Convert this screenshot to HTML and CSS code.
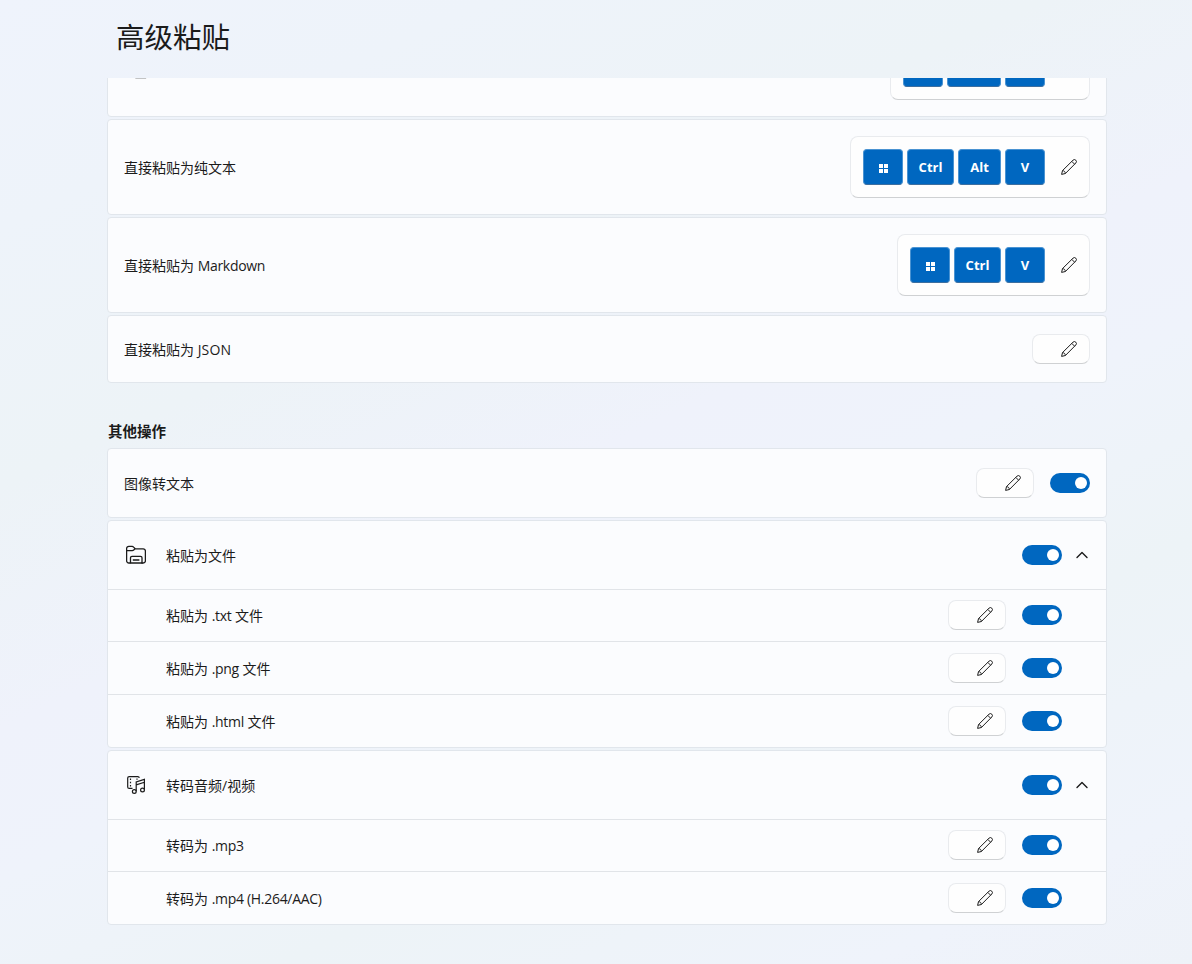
FILE: index.html
```
<!DOCTYPE html>
<html lang="zh-CN">
<head>
    <meta charset="UTF-8">
    <meta name="viewport" content="width=device-width, initial-scale=1.0">
    <title>高级粘贴</title>
    <link rel="stylesheet" href="styles.css">
</head>
<body>
    <svg class="defs" width="0" height="0">
        <symbol id="pencil" viewBox="0 0 16 16">
            <path d="M0.6 15.400l.9-3.800L12 1.200a1.950 1.950 0 0 1 2.800 2.800L4.400 14.500zM10.800 2.400l2.800 2.800M1.500 11.600c1.700.1 2.800 1.200 2.900 2.900" fill="none" stroke="currentColor" stroke-width="1" stroke-linejoin="round"/>
        </symbol>
        <symbol id="win" viewBox="0 0 9 9">
            <path d="M0 0h4v4H0zM5 0h4v4H5zM0 5h4v4H0zM5 5h4v4H5z" fill="currentColor"/>
        </symbol>
        <symbol id="chevron" viewBox="0 0 12 12">
            <path d="M1 8.6L6 3.6l5 5" fill="none" stroke="currentColor" stroke-width="1.4" stroke-linecap="round" stroke-linejoin="round"/>
        </symbol>
    </svg>

    <h1>高级粘贴</h1>
    <main class="scroll">
        <div class="card tall scrolled">
            <svg class="icon" viewBox="0 0 20 20"><path d="M6 1.500h9.500v17.200H6z" fill="none" stroke="currentColor" stroke-width="1.3"/></svg>
            <div class="shortcut">
                <span class="key"></span><span class="key shift"></span><span class="key"></span>
            </div>
        </div>
        <div class="card tall">
            <div class="label">直接粘贴为纯文本</div>
            <div class="shortcut">
                <span class="key"><svg class="win"><use href="#win"/></svg></span><span class="key ctrl">Ctrl</span><span class="key alt">Alt</span><span class="key">V</span>
                <svg class="pencil"><use href="#pencil"/></svg>
            </div>
        </div>
        <div class="card tall">
            <div class="label">直接粘贴为 <span class="latin">Markdown</span></div>
            <div class="shortcut">
                <span class="key"><svg class="win"><use href="#win"/></svg></span><span class="key ctrl">Ctrl</span><span class="key">V</span>
                <svg class="pencil"><use href="#pencil"/></svg>
            </div>
        </div>
        <div class="card">
            <div class="label">直接粘贴为 <span class="latin caps">JSON</span></div>
            <div class="shortcut"><svg class="pencil"><use href="#pencil"/></svg></div>
        </div>

        <h2>其他操作</h2>
        <div class="card single">
            <div class="label">图像转文本</div>
            <div class="shortcut"><svg class="pencil"><use href="#pencil"/></svg></div>
            <span class="toggle"></span>
        </div>

        <section class="group">
            <div class="group-head">
                <svg class="icon" viewBox="0 0 20 20">
                    <path d="M4.500 18H2.800A2.200 2.200 0 0 1 .6 15.800V3.600a2.200 2.200 0 0 1 2.200-2.200h3.300a2 2 0 0 1 1.500.7L9.200 3.800h8a2.200 2.200 0 0 1 2.200 2.200v9.800a2.200 2.200 0 0 1-2.200 2.200H15.500M.6 5.600h5.600a2 2 0 0 0 1.500-.6L9.200 3.800" fill="none" stroke="currentColor" stroke-width="1.3"/>
                    <path d="M4.500 18v-5.200a1.500 1.500 0 0 1 1.500-1.500h8.500a1.500 1.500 0 0 1 1.500 1.500V18zM6.800 15h6.600" fill="none" stroke="currentColor" stroke-width="1.3"/>
                </svg>
                <div class="label">粘贴为文件</div>
                <span class="toggle"></span>
                <svg class="chevron"><use href="#chevron"/></svg>
            </div>
            <div class="sub first">
                <div class="label">粘贴为 <span class="latin">.txt</span> 文件</div>
                <div class="shortcut"><svg class="pencil"><use href="#pencil"/></svg></div>
                <span class="toggle"></span>
            </div>
            <div class="sub">
                <div class="label">粘贴为 <span class="latin">.png</span> 文件</div>
                <div class="shortcut"><svg class="pencil"><use href="#pencil"/></svg></div>
                <span class="toggle"></span>
            </div>
            <div class="sub">
                <div class="label">粘贴为 <span class="latin">.html</span> 文件</div>
                <div class="shortcut"><svg class="pencil"><use href="#pencil"/></svg></div>
                <span class="toggle"></span>
            </div>
        </section>

        <section class="group">
            <div class="group-head">
                <svg class="icon" viewBox="0 0 20 20">
                    <g fill="none" stroke="currentColor" stroke-width="1.2">
                        <path d="M6.500 13.400H3.200a1.500 1.500 0 0 1-1.500-1.500V3.100a1.500 1.500 0 0 1 1.500-1.500h8.600a1.500 1.500 0 0 1 1.500 1.300"/>
                        <path d="M4.500 3.500v1.500M4.500 6.800v1.500M4.500 10v1.500M11 3.400v1.400"/>
                        <path d="M10.200 16.200V7l8.200-2.600v10.100M10.200 9.900l8.200-2.600"/>
                        <circle cx="8.300" cy="16.500" r="1.900"/>
                        <circle cx="16.500" cy="15" r="1.900"/>
                    </g>
                </svg>
                <div class="label">转码音频/视频</div>
                <span class="toggle"></span>
                <svg class="chevron"><use href="#chevron"/></svg>
            </div>
            <div class="sub first">
                <div class="label">转码为 <span class="latin">.mp3</span></div>
                <div class="shortcut"><svg class="pencil"><use href="#pencil"/></svg></div>
                <span class="toggle"></span>
            </div>
            <div class="sub">
                <div class="label">转码为 <span class="latin">.mp4 (H.264/AAC)</span></div>
                <div class="shortcut"><svg class="pencil"><use href="#pencil"/></svg></div>
                <span class="toggle"></span>
            </div>
        </section>
    </main>
</body>
</html>
```
FILE: styles.css
```
* {
    margin: 0;
    padding: 0;
    box-sizing: border-box;
}

body {
    height: 964px;
    overflow: hidden;
    background: linear-gradient(155deg, #eff3fc 0%, #eef3fa 15%, #edf3f7 32%, #eff2fb 48%, #eff3fb 58%, #edf3f7 72%, #eff3fb 90%, #eef2f8 100%);
    color: #1b1b1b;
    font-family: "Open Sans", "Noto Sans CJK SC", sans-serif;
    font-size: 14px;
}

svg {
    display: block;
    flex: none;
}

.defs {
    display: none;
}

h1 {
    height: 78px;
    padding: 17px 0 0 116px;
    font-size: 28.5px;
    font-weight: 400;
    line-height: 40px;
}

.scroll {
    height: 886px;
    padding: 0 85px 0 107px;
    overflow: hidden;
}

.card,
.group {
    margin-bottom: 2px;
    background: #fbfcfe;
    border: 1px solid #e1e6ec;
    border-radius: 4px;
}

.card {
    display: flex;
    align-items: center;
    height: 68px;
    padding: 0 16px;
}

.card.tall {
    height: 96px;
}

.card.scrolled {
    margin-top: -57px;
}

.card.single {
    height: 70px;
}

h2 {
    height: 63px;
    padding: 37px 0 0 1px;
    font-size: 14.5px;
    font-weight: 600;
    line-height: 20px;
}

.label {
    padding-top: 2px;
    line-height: 20px;
    white-space: nowrap;
}

.latin {
    letter-spacing: -0.3px;
}

.latin.caps {
    letter-spacing: 0.2px;
}

.icon {
    width: 20px;
    height: 20px;
    margin: 0 20px 0 2px;
}

.scrolled .icon {
    margin-left: 6px;
}

.shortcut {
    display: flex;
    align-items: center;
    gap: 4px;
    height: 30px;
    margin-left: auto;
    padding: 0 12px;
    background: #fefefe;
    border: 1px solid #e9ebee;
    border-bottom-color: #cfd1d3;
    border-radius: 8px;
}

.tall .shortcut {
    height: 62px;
}

.scrolled .shortcut {
    padding-right: 44px;
}

.key {
    display: flex;
    align-items: center;
    justify-content: center;
    width: 40px;
    height: 36px;
    background: #0067c0;
    border: 1px solid #4a93d2;
    border-bottom-color: #3d6fa0;
    border-radius: 4px;
    color: #fff;
    font-size: 13px;
    font-weight: 700;
}

.key.ctrl {
    width: 47px;
}

.key.alt {
    width: 43px;
}

.key.shift {
    width: 54px;
}

.win {
    width: 9px;
    height: 9px;
    margin-top: 3px;
}

.pencil {
    width: 16px;
    height: 16px;
    margin-left: 16px;
}

.key + .pencil {
    margin-left: 12px;
}

.toggle {
    flex: none;
    width: 40px;
    height: 20px;
    margin-left: 16px;
    padding: 4px 3px 4px 25px;
    background: #0067c0;
    border-radius: 10px;
}

.toggle::after {
    content: "";
    display: block;
    width: 12px;
    height: 12px;
    background: #fff;
    border-radius: 50%;
}

.group-head {
    display: flex;
    align-items: center;
    height: 68px;
    padding: 0 18px 0 16px;
}

.group-head .toggle {
    margin-left: auto;
}

.chevron {
    width: 12px;
    height: 12px;
    margin-left: 14px;
}

.sub {
    display: flex;
    align-items: center;
    height: 53px;
    padding: 0 44px 0 58px;
    border-top: 1px solid #e1e4e8;
}

.sub.first {
    height: 52px;
    padding-bottom: 1px;
}
```
